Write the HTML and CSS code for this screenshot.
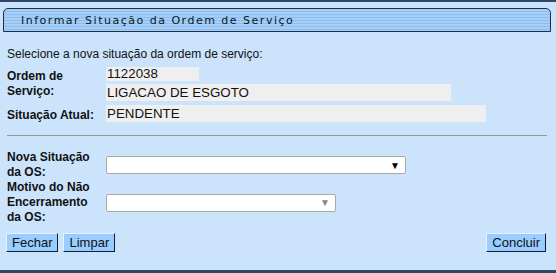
FILE: index.html
```html
<!DOCTYPE html>
<html>

<head>
  <title>Informar Situação da Ordem de Serviço</title>
  <link rel="stylesheet" href="styles.css">
</head>

<body>
  <div id="page">
    <div id="tab">Informar Situação da Ordem de Serviço</div>

    <div id="content">
      <div class="intro">Selecione a nova situação da ordem de serviço:</div>

      <div class="grid">
        <div class="label">Ordem de<br>Serviço:</div>
        <div class="values">
          <div class="field short">1122038</div>
          <div class="field mid">LIGACAO DE ESGOTO</div>
        </div>

        <div class="label one">Situação Atual:</div>
        <div class="values">
          <div class="field long">PENDENTE</div>
        </div>
      </div>

      <hr>

      <div class="grid sel">
        <div class="label">Nova Situação<br>da OS:</div>
        <div class="pick">
          <div class="select wide"><span class="arrow">&#9660;</span></div>
        </div>

        <div class="label">Motivo do Não<br>Encerramento<br>da OS:</div>
        <div class="pick">
          <div class="select narrow off"><span class="arrow">&#9660;</span></div>
        </div>
      </div>

      <div class="buttons">
        <div class="btn">Fechar</div>
        <div class="btn">Limpar</div>
        <div class="spacer"></div>
        <div class="btn">Concluir</div>
      </div>
    </div>
  </div>
</body>

</html>
```

FILE: styles.css
```css
* {
  font-family: "Liberation Sans", Arial, sans-serif;
  box-sizing: border-box;
}

body {
  margin: 0;
  background: #cbe4fc;
}

#page {
  height: 273px;
  border-top: 2px solid #2c4866;
  border-bottom: 3px solid #2c4866;
  display: flex;
  flex-direction: column;
}

#tab {
  margin: 6px 5px 0 3px;
  height: 24px;
  border: 1px solid #1c2f4a;
  border-radius: 5px 5px 0 0;
  background: repeating-linear-gradient(#a6cff7 0 2px, #8ebcec 2px 3px);
  padding: 5px 0 0 17px;
  font-family: "DejaVu Sans", Verdana, sans-serif;
  font-size: 11px;
  letter-spacing: 1.5px;
  color: #0a1626;
}

#content {
  flex: 1;
  padding: 0 7px;
  font-size: 12px;
  color: #111;
}

.intro {
  margin-top: 15px;
}

.grid {
  display: grid;
  grid-template-columns: 99px 1fr;
  row-gap: 4px;
  margin-top: 6px;
}

.label {
  font-weight: bold;
  line-height: 15px;
  padding-top: 2px;
}

.label.one {
  padding-top: 3px;
}

.values {
  display: flex;
  flex-direction: column;
  gap: 3px;
}

.field {
  background: #efefef;
  font-size: 13.33px;
  line-height: 17px;
  padding-left: 1px;
}

.short {
  width: 93px;
  height: 14px;
  line-height: 14px;
}

.mid {
  width: 345px;
}

.long {
  width: 380px;
}

hr {
  border: 0;
  border-top: 1px solid #999;
  margin: 12px 2px 0 0;
}

.sel {
  margin-top: 14px;
  row-gap: 0;
}

.sel .label {
  padding-top: 0;
}

.pick {
  display: flex;
  align-items: center;
}

.select {
  height: 18px;
  background: #fff;
  border: 1px solid #a9a9a9;
  border-radius: 2px;
  display: flex;
  justify-content: flex-end;
  align-items: center;
  padding-right: 5px;
}

.wide {
  width: 300px;
}

.narrow {
  width: 230px;
}

.arrow {
  font-size: 10px;
  color: #000;
}

.off .arrow {
  color: #888;
}

.buttons {
  display: flex;
  gap: 5px;
  margin: 8px 3px 0 -1px;
}

.spacer {
  flex: 1;
}

.btn {
  background: #99ccff;
  border: 1px solid;
  border-color: #e8f2ff #0d1f3a #0d1f3a #e8f2ff;
  padding: 1px 5px;
  font-size: 13px;
  height: 19px;
  line-height: 15px;
  color: #111;
}
```
